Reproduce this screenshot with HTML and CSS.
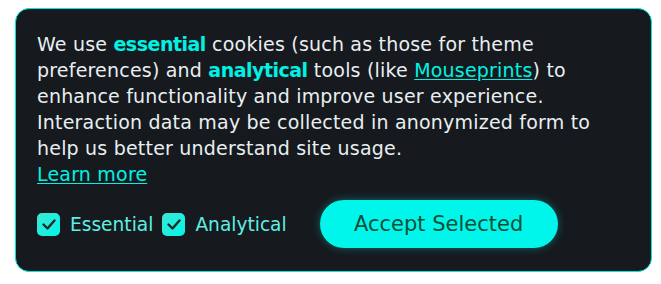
FILE: index.html
```html
<!DOCTYPE html>
<html lang="en">
<head>
<meta charset="utf-8">
<title>Cookie consent</title>
<link rel="stylesheet" href="styles.css">
</head>
<body>
<div class="card">
  <p class="message">We use <strong class="hl">essential</strong> cookies (such as those for theme<br>preferences) and <strong class="hl">analytical</strong> tools (like <a class="link" href="#">Mouseprints</a>) to<br>enhance functionality and improve user experience.<br>Interaction data may be collected in anonymized form to<br>help us better understand site usage.<br><a class="link" href="#">Learn more</a></p>
  <div class="actions">
    <label class="check">
      <span class="box"><svg viewBox="0 0 22 22" width="22" height="22"><path d="M5.5 11.5 L9.5 15.5 L16.5 7.5" fill="none" stroke="#1b2b2b" stroke-width="2.4" stroke-linecap="round" stroke-linejoin="round"/></svg></span>
      <span class="label">Essential</span>
    </label>
    <label class="check">
      <span class="box"><svg viewBox="0 0 22 22" width="22" height="22"><path d="M5.5 11.5 L9.5 15.5 L16.5 7.5" fill="none" stroke="#1b2b2b" stroke-width="2.4" stroke-linecap="round" stroke-linejoin="round"/></svg></span>
      <span class="label">Analytical</span>
    </label>
    <button class="accept" type="button">Accept Selected</button>
  </div>
</div>
</body>
</html>
```
FILE: styles.css
```css
html, body {
  background: #ffffff;
}
body {
  margin: 8px 9px 0 15px;
  font-family: "DejaVu Sans", "Noto Sans", sans-serif;
}
.card {
  background: #16191e;
  border: 1px solid #00e8dc;
  border-radius: 14px;
  padding: 22px 20px 23px 21px;
  height: 217px;
}
.message {
  margin: 0;
  color: #e8eff1;
  font-size: 19px;
  letter-spacing: 0.2px;
  line-height: 26px;
}
.hl {
  color: #00f2e4;
  font-weight: 700;
  letter-spacing: -0.5px;
}
.link {
  color: #00f2e4;
  text-decoration: underline;
  text-underline-offset: 2px;
}
.actions {
  display: flex;
  align-items: center;
  margin-top: 13px;
}
.check {
  display: flex;
  align-items: center;
  gap: 10px;
  margin-right: 9px;
}
.box {
  width: 23px;
  height: 23px;
  border-radius: 5px;
  background: linear-gradient(135deg, #3ee6d2, #00f6ea);
  display: flex;
  align-items: center;
  justify-content: center;
}
.label {
  color: #5eeee2;
  font-size: 18.6px;
}
.accept {
  margin-left: 24px;
  width: 238px;
  height: 48px;
  border: none;
  border-radius: 24px;
  background: #00f6ea;
  color: #0e4e36;
  font-family: "DejaVu Sans", "Noto Sans", sans-serif;
  font-size: 21px;
  box-shadow: 0 0 8px rgba(0, 246, 234, 0.35);
}
```
